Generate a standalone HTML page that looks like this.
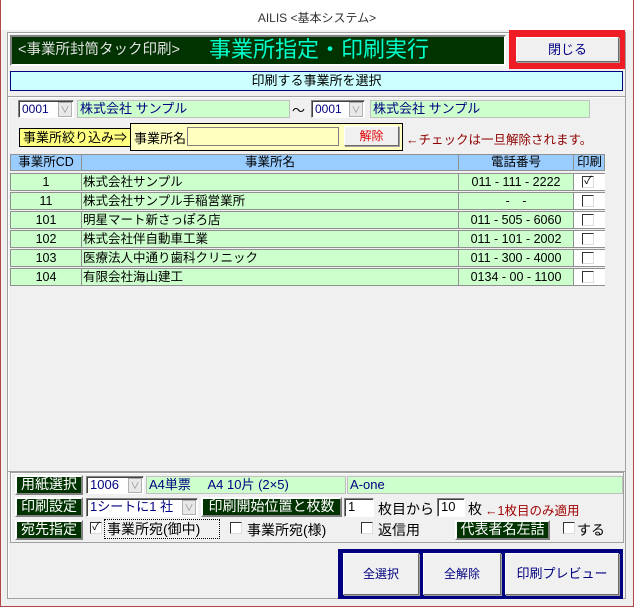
<!DOCTYPE html><html><head><meta charset="utf-8"><style>
*{box-sizing:border-box;margin:0;padding:0}
body{width:634px;height:607px;background:#fff;font-family:"Liberation Sans","Noto Sans CJK JP",sans-serif;font-size:12px;position:relative;overflow:hidden;color:#000}
.a{position:absolute}
.win{left:0;top:0;width:634px;height:607px;border:1px solid #b04848;border-top:none}
.body{left:1px;top:30px;width:632px;height:576px;background:#f0f0f0}
.grp{border:1px solid #a0a0a0;box-shadow:inset 1px 1px 0 #fff}
.dk{background:#003300;color:#fff;border:2px solid;border-color:#fff #808080 #808080 #fff;text-align:center;font-size:14px;line-height:15px}
.btn{background:#f0f0f0;border:1px solid;border-color:#fff #696969 #696969 #fff;box-shadow:1px 1px 0 #a0a0a0;text-align:center;color:#000080}
.g{background:#ccffcc;color:#000080;border:1px solid #c0c0c0;padding-left:2px;line-height:16px}
.cb{background:#fff;border:1px solid #828282;border-right-color:#fff;border-bottom-color:#fff;box-shadow:inset 1px 1px 0 #404040;color:#000080;padding-left:3px;line-height:16px}
.dd{background:#e8e8e8;border:1px solid #b0b0b0;color:#888;text-align:center;font-size:9px;line-height:14px}
.row{left:10px;width:595px;height:18px;background:#ccffcc;border:1px solid #909090;font-size:12.5px;line-height:16px}
.row span{position:absolute;top:0}
.chk{width:12px;height:12px;background:#fff;border:1px solid;border-color:#333 #ddd #ddd #333;font-size:11px;line-height:9px;text-align:center}
.t14{font-size:14px}
</style></head><body>
<div class="a win"></div>
<div class="a" style="left:0;top:9px;width:634px;text-align:center;font-size:12px;color:#333">AILIS &lt;基本システム&gt;</div>
<div class="a body"></div>
<div class="a grp" style="left:7px;top:32px;width:619px;height:567px"></div>
<div class="a" style="left:10px;top:35px;width:496px;height:31px;background:#003300;border:2px solid;border-color:#808080 #fff #fff #808080"></div>
<div class="a" style="left:18px;top:40px;color:#e0e0e0;font-size:14.5px;line-height:20px">&lt;事業所封筒タック印刷&gt;</div>
<div class="a" style="left:209px;top:35px;color:#00ffcc;font-size:22px;line-height:30px">事業所指定・印刷実行</div>
<div class="a" style="left:509px;top:30px;width:116px;height:39px;background:#ee1c24"></div>
<div class="a btn" style="left:516px;top:37px;width:103px;height:25px;line-height:23px;font-size:13px">閉じる</div>
<div class="a" style="left:10px;top:71px;width:613px;height:20px;background:#ccffff;border:1px solid #000080;text-align:center;font-size:13px;line-height:18px">印刷する事業所を選択</div>
<div class="a grp" style="left:7px;top:96px;width:619px;height:376px"></div>
<div class="a cb" style="left:18px;top:100px;width:56px;height:18px">0001</div>
<div class="a dd" style="left:58px;top:102px;width:14px;height:15px">∨</div>
<div class="a g" style="left:77px;top:100px;width:213px;height:18px;font-size:13px">株式会社 サンプル</div>
<div class="a" style="left:292px;top:100px;font-size:13px">～</div>
<div class="a cb" style="left:311px;top:100px;width:54px;height:18px">0001</div>
<div class="a dd" style="left:349px;top:102px;width:14px;height:15px">∨</div>
<div class="a g" style="left:370px;top:100px;width:220px;height:18px;font-size:13px">株式会社 サンプル</div>
<div class="a" style="left:19px;top:128px;width:112px;height:19px;background:#ffff80;border:1px solid #000;font-size:13px;line-height:17px;padding-left:3px">事業所絞り込み⇒</div>
<div class="a" style="left:130px;top:123px;width:273px;height:28px;background:#ffffc0;border:1px solid #000"></div>
<div class="a" style="left:134px;top:128px;font-size:13px">事業所名</div>
<div class="a" style="left:187px;top:127px;width:152px;height:19px;background:#ffffc0;border:1px solid #808080"></div>
<div class="a btn" style="left:344px;top:126px;width:55px;height:20px;color:#e00000;line-height:18px">解除</div>
<div class="a" style="left:406px;top:129px;color:#900000;font-size:12.5px">←チェックは一旦解除されます。</div>
<div class="a" style="left:10px;top:154px;width:595px;height:17px;background:#99ccff;border:1px solid #909090;font-size:12.5px;line-height:15px">
<span class="a" style="left:0;width:70px;text-align:center">事業所CD</span><span class="a" style="left:70px;top:0;height:15px;border-left:1px solid #909090;width:377px;text-align:center">事業所名</span><span class="a" style="left:447px;height:15px;border-left:1px solid #909090;width:115px;text-align:center">電話番号</span><span class="a" style="left:562px;height:15px;border-left:1px solid #909090;width:32px;text-align:center">印刷</span></div>
<div id="rows"></div>
<div class="a row" style="top:173px"><span style="left:0;width:70px;text-align:center">1</span><span style="left:70px;height:16px;border-left:1px solid #909090;padding-left:1px">株式会社サンプル</span><span style="left:447px;width:115px;height:16px;border-left:1px solid #909090;text-align:center">011 - 111 - 2222</span><span style="left:562px;width:32px;height:16px;border-left:1px solid #909090;background:#fff"></span><div class="a chk" style="left:571px;top:2px">✓</div></div>
<div class="a row" style="top:192px"><span style="left:0;width:70px;text-align:center">11</span><span style="left:70px;height:16px;border-left:1px solid #909090;padding-left:1px">株式会社サンプル手稲営業所</span><span style="left:447px;width:115px;height:16px;border-left:1px solid #909090;text-align:center">-　-</span><span style="left:562px;width:32px;height:16px;border-left:1px solid #909090;background:#fff"></span><div class="a chk" style="left:571px;top:2px"></div></div>
<div class="a row" style="top:211px"><span style="left:0;width:70px;text-align:center">101</span><span style="left:70px;height:16px;border-left:1px solid #909090;padding-left:1px">明星マート新さっぽろ店</span><span style="left:447px;width:115px;height:16px;border-left:1px solid #909090;text-align:center">011 - 505 - 6060</span><span style="left:562px;width:32px;height:16px;border-left:1px solid #909090;background:#fff"></span><div class="a chk" style="left:571px;top:2px"></div></div>
<div class="a row" style="top:230px"><span style="left:0;width:70px;text-align:center">102</span><span style="left:70px;height:16px;border-left:1px solid #909090;padding-left:1px">株式会社伴自動車工業</span><span style="left:447px;width:115px;height:16px;border-left:1px solid #909090;text-align:center">011 - 101 - 2002</span><span style="left:562px;width:32px;height:16px;border-left:1px solid #909090;background:#fff"></span><div class="a chk" style="left:571px;top:2px"></div></div>
<div class="a row" style="top:249px"><span style="left:0;width:70px;text-align:center">103</span><span style="left:70px;height:16px;border-left:1px solid #909090;padding-left:1px">医療法人中通り歯科クリニック</span><span style="left:447px;width:115px;height:16px;border-left:1px solid #909090;text-align:center">011 - 300 - 4000</span><span style="left:562px;width:32px;height:16px;border-left:1px solid #909090;background:#fff"></span><div class="a chk" style="left:571px;top:2px"></div></div>
<div class="a row" style="top:268px"><span style="left:0;width:70px;text-align:center">104</span><span style="left:70px;height:16px;border-left:1px solid #909090;padding-left:1px">有限会社海山建工</span><span style="left:447px;width:115px;height:16px;border-left:1px solid #909090;text-align:center">0134 - 00 - 1100</span><span style="left:562px;width:32px;height:16px;border-left:1px solid #909090;background:#fff"></span><div class="a chk" style="left:571px;top:2px"></div></div>

<div class="a grp" style="left:10px;top:472px;width:614px;height:71px"></div>
<div class="a dk" style="left:15px;top:475px;width:68px;height:20px">用紙選択</div>
<div class="a cb" style="left:86px;top:476px;width:58px;height:18px;font-size:13px">1006</div>
<div class="a dd" style="left:128px;top:478px;width:14px;height:15px">∨</div>
<div class="a g" style="left:146px;top:476px;width:200px;height:18px;font-size:13px">A4単票　 A4 10片 (2×5)</div>
<div class="a g" style="left:347px;top:476px;width:276px;height:18px;font-size:13px">A-one</div>
<div class="a dk" style="left:15px;top:497px;width:68px;height:20px">印刷設定</div>
<div class="a cb" style="left:86px;top:498px;width:112px;height:19px;font-size:13px">1シートに1 社</div>
<div class="a dd" style="left:182px;top:500px;width:14px;height:15px">∨</div>
<div class="a dk" style="left:201px;top:497px;width:141px;height:20px">印刷開始位置と枚数</div>
<div class="a cb" style="left:344px;top:498px;width:30px;height:19px;color:#000;font-size:13px">1</div>
<div class="a t14" style="left:378px;top:499px">枚目から</div>
<div class="a cb" style="left:437px;top:498px;width:28px;height:19px;color:#000;font-size:13px">10</div>
<div class="a t14" style="left:468px;top:499px">枚</div>
<div class="a" style="left:485px;top:500px;color:#a00000;font-size:12.5px">←1枚目のみ適用</div>
<div class="a dk" style="left:15px;top:520px;width:68px;height:20px">宛先指定</div>
<div class="a chk" style="left:90px;top:522px;width:12px;height:12px">✓</div>
<div class="a t14" style="left:104px;top:519px;width:116px;height:20px;border:1px dotted #000;padding-left:2px;line-height:18px">事業所宛(御中)</div>
<div class="a chk" style="left:230px;top:522px"></div>
<div class="a t14" style="left:247px;top:520px">事業所宛(様)</div>
<div class="a chk" style="left:361px;top:522px"></div>
<div class="a t14" style="left:378px;top:520px">返信用</div>
<div class="a dk" style="left:455px;top:520px;width:95px;height:20px">代表者名左詰</div>
<div class="a chk" style="left:563px;top:522px"></div>
<div class="a t14" style="left:577px;top:520px">する</div>
<div class="a" style="left:338px;top:549px;width:285px;height:50px;border:3px solid #000080;background:#000080"></div>
<div class="a btn" style="left:343px;top:553px;width:76px;height:42px;line-height:40px">全選択</div>
<div class="a btn" style="left:423px;top:553px;width:78px;height:42px;line-height:40px">全解除</div>
<div class="a btn" style="left:505px;top:553px;width:114px;height:42px;line-height:40px;font-size:13px">印刷プレビュー</div>
</body></html>
